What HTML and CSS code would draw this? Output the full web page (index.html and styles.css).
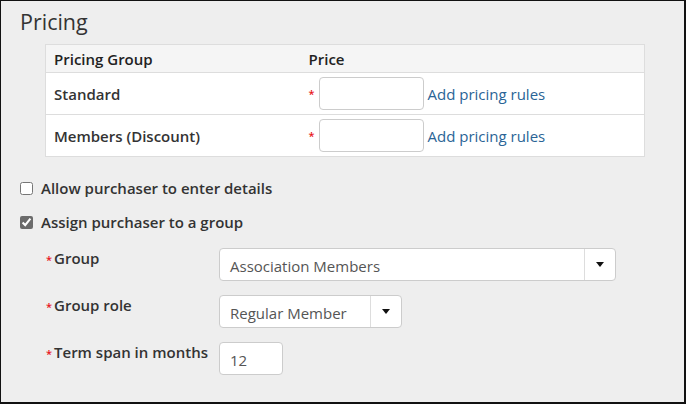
FILE: index.html
```html
<!DOCTYPE html>
<html lang="en">
<head>
    <meta charset="UTF-8">
    <meta name="viewport" content="width=device-width, initial-scale=1.0">
    <title>Pricing</title>
    <link rel="stylesheet" href="styles.css">
</head>
<body>
    <div class="panel">
        <h2>Pricing</h2>

        <table class="pricing-table">
            <thead>
                <tr>
                    <th class="col-group">Pricing Group</th>
                    <th>Price</th>
                </tr>
            </thead>
            <tbody>
                <tr>
                    <td class="col-group">Standard</td>
                    <td>
                        <div class="price-cell">
                            <span class="req">*</span>
                            <input type="text" class="text-input price-input">
                            <a href="#" class="link">Add pricing rules</a>
                        </div>
                    </td>
                </tr>
                <tr>
                    <td class="col-group">Members (Discount)</td>
                    <td>
                        <div class="price-cell">
                            <span class="req">*</span>
                            <input type="text" class="text-input price-input">
                            <a href="#" class="link">Add pricing rules</a>
                        </div>
                    </td>
                </tr>
            </tbody>
        </table>

        <div class="options">
            <label class="check-row">
                <input type="checkbox">
                <span>Allow purchaser to enter details</span>
            </label>
            <label class="check-row">
                <input type="checkbox" checked>
                <span>Assign purchaser to a group</span>
            </label>
        </div>

        <div class="group-fields">
            <div class="field">
                <label class="field-label"><span class="req">*</span>Group</label>
                <div class="select select-wide">
                    <span class="select-value">Association Members</span>
                    <span class="select-arrow"></span>
                </div>
            </div>
            <div class="field">
                <label class="field-label"><span class="req">*</span>Group role</label>
                <div class="select select-role">
                    <span class="select-value">Regular Member</span>
                    <span class="select-arrow"></span>
                </div>
            </div>
            <div class="field">
                <label class="field-label"><span class="req">*</span>Term span in months</label>
                <input type="text" class="text-input term-input" value="12">
            </div>
        </div>
    </div>
</body>
</html>
```

FILE: styles.css
```css
* {
    margin: 0;
    padding: 0;
    box-sizing: border-box;
}

body {
    font-family: 'Open Sans', 'Noto Sans', sans-serif;
    font-size: 15px;
    line-height: 20px;
    color: #333;
    background: #eee;
}

.panel {
    height: 404px;
    background: #eee;
    border: 1px solid #111;
    border-right-width: 2px;
    border-bottom-width: 2px;
    padding: 7px 19px 0;
}

h2 {
    font-size: 21.5px;
    font-weight: 400;
    line-height: 28px;
    color: #333;
    margin-bottom: 8px;
}

.pricing-table {
    margin-left: 25px;
    width: 600px;
    border-collapse: collapse;
    background: #fff;
    border: 1px solid #ddd;
}

.pricing-table th,
.pricing-table td {
    text-align: left;
    font-weight: 600;
    vertical-align: middle;
    border-top: 1px solid #ddd;
}

.pricing-table th {
    background: #f5f5f5;
    padding: 4px 8px 3px;
    color: #222;
}

.pricing-table td {
    padding: 4px 8px;
    height: 42px;
}

.col-group {
    width: 255px;
}

.price-cell {
    display: flex;
    align-items: center;
}

.req {
    color: #e8161b;
    font-size: 11px;
    font-weight: 600;
}

.price-cell .req {
    width: 10px;
}

.text-input {
    font-family: inherit;
    font-size: 15px;
    color: #555;
    background: #fff;
    border: 1px solid #ccc;
    border-radius: 4px;
    height: 33px;
    padding: 0 10px;
    outline: none;
}

.price-input {
    width: 105px;
}

.link {
    color: #2a6496;
    text-decoration: none;
    font-weight: 400;
    margin-left: 4px;
}

.options {
    margin-top: 21px;
    display: flex;
    flex-direction: column;
    gap: 14px;
}

.check-row {
    display: flex;
    align-items: center;
    gap: 8px;
    font-weight: 600;
}

.check-row input {
    width: 13px;
    height: 13px;
    margin: 0;
    accent-color: #6b6b6b;
}

.group-fields {
    margin-top: 16px;
    padding-left: 26px;
    display: flex;
    flex-direction: column;
    gap: 14px;
}

.field {
    display: grid;
    grid-template-columns: 173px auto;
    align-items: start;
}

.field-label {
    font-weight: 600;
    white-space: nowrap;
}

.field-label .req {
    margin-right: 2px;
}

.select {
    display: flex;
    align-items: center;
    height: 33px;
    background: #fff;
    border: 1px solid #ccc;
    border-radius: 4px;
    color: #555;
}

.select-wide {
    width: 397px;
}

.select-role {
    width: 183px;
}

.select-value {
    flex: 1;
    padding-left: 10px;
    padding-top: 2px;
}

.select-arrow {
    width: 31px;
    height: 100%;
    border-left: 1px solid #ddd;
    display: flex;
    align-items: center;
    justify-content: center;
}

.select-arrow::after {
    content: '';
    border-left: 4px solid transparent;
    border-right: 4px solid transparent;
    border-top: 5px solid #111;
}

.term-input {
    width: 64px;
    padding-top: 2px;
}
```
